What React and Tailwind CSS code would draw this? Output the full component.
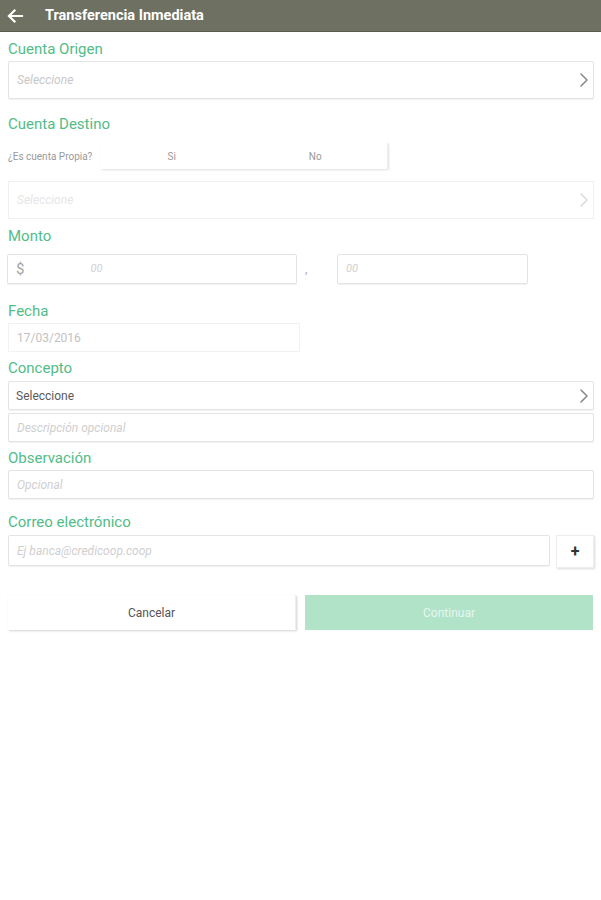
import React from "react";

const ChevronRight = ({ className = "" }) => (
  <svg width="10" height="16" viewBox="0 0 10 16" className={className} fill="none">
    <path d="M2 2l6 6-6 6" stroke="currentColor" strokeWidth="1.6" strokeLinecap="round" strokeLinejoin="round" />
  </svg>
);

const Label = ({ children, className = "" }) => (
  <div className={`text-[15px] leading-[17px] text-[#52bc88] ${className}`}>{children}</div>
);

const boxCls = "border border-[#e4e4e4] bg-white shadow-[0_1px_1px_rgba(0,0,0,0.06)] rounded-[2px]";

const App = () => {
  return (
    <div className="w-[601px] h-[900px] bg-white font-['Roboto',sans-serif]">
      <header className="h-[32px] bg-[#6e7062] border-b border-[#5a5c50] flex items-center text-white">
        <svg width="18" height="16" viewBox="0 0 18 16" className="ml-[6px]" fill="none">
          <path d="M16 8H3M8.5 2.5L3 8l5.5 5.5" stroke="white" strokeWidth="2.2" strokeLinecap="square" />
        </svg>
        <h1 className="ml-[21px] mt-[1px] text-[14.5px] font-bold">Transferencia Inmediata</h1>
      </header>

      <main className="pl-[8px] pr-[7px]">
        <Label className="mt-[9px]">Cuenta Origen</Label>
        <div className={`${boxCls} mt-[3px] h-[38px] flex items-center justify-between pl-[8px] pr-[4px]`}>
          <span className="text-[12px] italic text-[#c8c8c8]">Seleccione</span>
          <ChevronRight className="text-[#8a8a8a]" />
        </div>

        <Label className="mt-[17px]">Cuenta Destino</Label>
        <div className="mt-[10px] flex items-center h-[26px]">
          <span className="w-[92px] text-[10px] text-[#9a9a9a]">¿Es cuenta Propia?</span>
          <div className="w-[288px] h-[26px] flex shadow-[1px_1px_2px_rgba(0,0,0,0.12)] border-r border-[#eee] text-[10px] text-[#999]">
            <div className="w-[144px] flex items-center justify-center">Si</div>
            <div className="w-[144px] flex items-center justify-center">No</div>
          </div>
        </div>
        <div className="border border-[#f0f0f0] mt-[12px] h-[38px] flex items-center justify-between pl-[8px] pr-[4px]">
          <span className="text-[12px] italic text-[#e6e6e6]">Seleccione</span>
          <ChevronRight className="text-[#dcdcdc]" />
        </div>

        <Label className="mt-[9px]">Monto</Label>
        <div className="mt-[9px] flex items-center">
          <div className={`${boxCls} -ml-[1px] w-[290px] h-[30px] flex items-center pl-[8px]`}>
            <span className="text-[15px] text-[#a5a5a5]">$</span>
            <span className="ml-[66px] text-[11px] italic text-[#cfcfcf]">00</span>
          </div>
          <span className="ml-[8px] w-[32px] text-[12px] text-[#aaa]">,</span>
          <div className={`${boxCls} w-[191px] h-[30px] flex items-center pl-[8px]`}>
            <span className="text-[11px] italic text-[#cfcfcf]">00</span>
          </div>
        </div>

        <Label className="mt-[19px]">Fecha</Label>
        <div className="mt-[3px] w-[292px] h-[29px] border border-[#f2f2f2] flex items-center pl-[8px]">
          <span className="text-[12px] text-[#c2c2c2]">17/03/2016</span>
        </div>

        <Label className="mt-[8px]">Concepto</Label>
        <div className={`${boxCls} mt-[4px] h-[29px] flex items-center justify-between pl-[7px] pr-[4px]`}>
          <span className="text-[12px] text-[#5a5a5a]">Seleccione</span>
          <ChevronRight className="text-[#8a8a8a]" />
        </div>
        <div className={`${boxCls} mt-[3px] h-[29px] flex items-center pl-[8px]`}>
          <span className="text-[12px] italic text-[#cfcfcf]">Descripción opcional</span>
        </div>

        <Label className="mt-[8px]">Observación</Label>
        <div className={`${boxCls} mt-[3px] h-[29px] flex items-center pl-[8px]`}>
          <span className="text-[12px] italic text-[#cfcfcf]">Opcional</span>
        </div>

        <Label className="mt-[15px]">Correo electrónico</Label>
        <div className="mt-[4px] flex items-start">
          <div className={`${boxCls} w-[542px] h-[31px] flex items-center pl-[8px]`}>
            <span className="text-[12px] italic text-[#cfcfcf]">Ej banca@credicoop.coop</span>
          </div>
          <button className="ml-[6px] w-[38px] h-[33px] bg-white border border-[#eee] shadow-[1px_1px_2px_rgba(0,0,0,0.15)] flex items-center justify-center text-[16px] font-bold text-[#333]">
            +
          </button>
        </div>

        <div className="mt-[27px] flex">
          <button className="w-[288px] h-[35px] bg-white shadow-[1px_1px_2px_rgba(0,0,0,0.18)] border-r border-[#eee] text-[12px] text-[#555]">
            Cancelar
          </button>
          <button className="ml-[9px] w-[288px] h-[35px] bg-[#b1e3c9] text-[12px] text-[#e6f6ee]">
            Continuar
          </button>
        </div>
      </main>
    </div>
  );
};

export default App;
